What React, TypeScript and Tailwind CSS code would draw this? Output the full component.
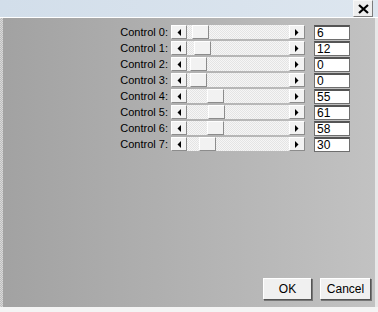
import React from "react";

const controls = [6, 12, 0, 0, 55, 61, 58, 30];

function ArrowButton({ dir }: { dir: "left" | "right" }) {
  return (
    <div className="flex h-[14px] w-[16px] items-center justify-center border border-t-white border-l-white border-r-[#8c8c8c] border-b-[#8c8c8c] bg-[#f2f2f2]">
      <svg width="4" height="7" viewBox="0 0 4 7">
        {dir === "left" ? (
          <polygon points="4,0 4,7 0.5,3.5" fill="#000" />
        ) : (
          <polygon points="0,0 0,7 3.5,3.5" fill="#000" />
        )}
      </svg>
    </div>
  );
}

function ScrollBar({ value }: { value: number }) {
  const left = 3 + Math.round(value * 0.3);
  return (
    <div className="flex h-[14px] w-[134px]">
      <ArrowButton dir="left" />
      <div className="relative flex-1 bg-[#ececec] bg-[repeating-conic-gradient(#f6f6f6_0%_25%,#e4e4e4_0%_50%)] bg-[length:2px_2px]">
        <div
          className="absolute top-0 h-[14px] w-[17px] border border-t-white border-l-white border-r-[#8c8c8c] border-b-[#8c8c8c] bg-[#f2f2f2]"
          style={{ left }}
        />
      </div>
      <ArrowButton dir="right" />
    </div>
  );
}

export default function App() {
  return (
    <div className="flex h-[312px] w-[378px] flex-col bg-[#f4f4f4] font-['Liberation_Sans',Arial,sans-serif] text-[11px] text-black">
      {/* title bar */}
      <div className="flex h-[17px] justify-end bg-gradient-to-r from-[#d2deea] to-[#dde6ef] pr-[5px]">
        <div className="flex h-[17px] w-[20px] items-center justify-center border border-t-[#f8f8f8] border-l-[#f8f8f8] border-r-[#7c7c7c] border-b-[#7c7c7c] bg-[#eeeeee]">
          <svg width="11" height="10" viewBox="0 0 11 10">
            <path d="M1 1 L10 9 M10 1 L1 9" stroke="#000" strokeWidth="2.2" />
          </svg>
        </div>
      </div>
      <div className="h-[1px] bg-white" />

      <div className="flex flex-1">
        <div className="w-[3px] bg-[#c8c8c8] bg-[repeating-conic-gradient(#bdbdbd_0%_25%,#d8d8d8_0%_50%)] bg-[length:2px_2px]" />
        <div className="flex flex-1 flex-col bg-gradient-to-r from-[#a2a2a2] to-[#c2c2c2]">
          <div className="flex flex-col gap-[2px] pt-[7px]">
            {controls.map((v, i) => (
              <div key={i} className="flex h-[14px] items-center">
                <div className="ml-[107px] w-[58px] text-right leading-none">Control {i}:</div>
                <div className="ml-[3px]">
                  <ScrollBar value={v} />
                </div>
                <div className="ml-[9px] flex h-[15px] w-[36px] items-center border border-[#6e6e6e] border-t-2 border-t-[#555] bg-white pl-[2px] text-[12px] leading-none">
                  {v}
                </div>
              </div>
            ))}
          </div>

          <div className="mt-auto mb-[7px] flex justify-end gap-[8px] pr-[4px]">
            <button className="h-[22px] w-[49px] border border-t-white border-l-white border-r-[#555] border-b-[#555] bg-[#f0f0f0] text-[12px] shadow-[1px_1px_0_#777]">
              OK
            </button>
            <button className="h-[22px] w-[51px] border border-t-white border-l-white border-r-[#555] border-b-[#555] bg-[#f0f0f0] text-[12px] shadow-[1px_1px_0_#777]">
              Cancel
            </button>
          </div>
        </div>
        <div className="w-[3px] bg-[#e8e8e8]" />
      </div>
      <div className="h-[5px] bg-[#f4f4f4]" />
    </div>
  );
}
